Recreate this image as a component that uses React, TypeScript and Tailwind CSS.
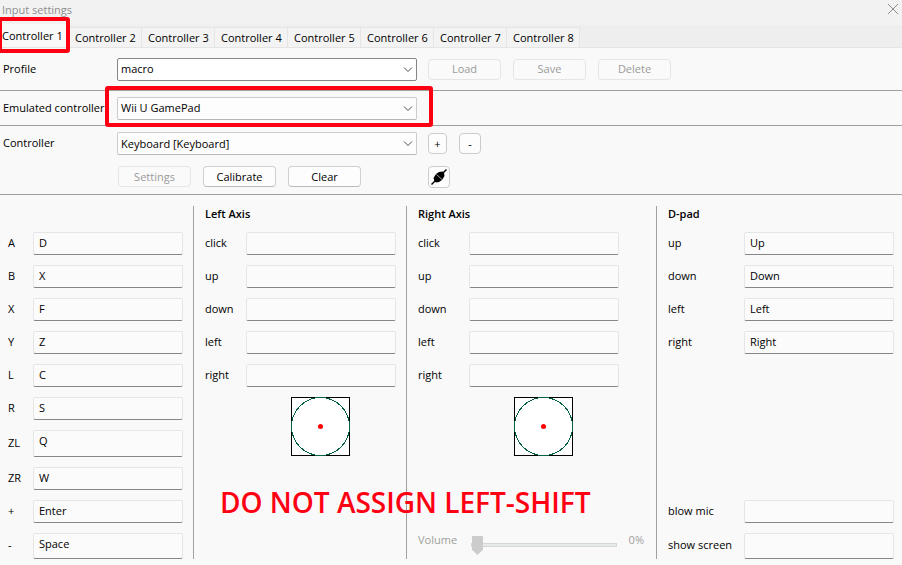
import type { ReactNode } from "react";

type Field = { label: string; value: string; tall?: "h-[27px]" | "h-[26px]" };

const buttons: Field[] = [
  { label: "A", value: "D" },
  { label: "B", value: "X" },
  { label: "X", value: "F" },
  { label: "Y", value: "Z" },
  { label: "L", value: "C" },
  { label: "R", value: "S" },
  { label: "ZL", value: "Q", tall: "h-[27px]" },
  { label: "ZR", value: "W" },
  { label: "+", value: "Enter" },
  { label: "-", value: "Space", tall: "h-[26px]" },
];

const axis: Field[] = ["click", "up", "down", "left", "right"].map((label) => ({ label, value: "" }));

const dpad: Field[] = [
  { label: "up", value: "Up" },
  { label: "down", value: "Down" },
  { label: "left", value: "Left" },
  { label: "right", value: "Right" },
];

const extras: Field[] = [
  { label: "blow mic", value: "" },
  { label: "show screen", value: "", tall: "h-[26px]" },
];

function FieldRow({ id, field, labelWidth }: { id: string; field: Field; labelWidth: string }) {
  return (
    <div className={`flex items-center ${field.tall ?? "h-[23px]"}`}>
      <label htmlFor={id} className={`shrink-0 pb-[2px] ${labelWidth}`}>
        {field.label}
      </label>
      <input
        id={id}
        type="text"
        defaultValue={field.value}
        className={`h-full w-full min-w-0 flex-1 rounded-[2px] border border-[#e6e6e6] border-b-[#868686] bg-[#fbfbfb] px-[5px] outline-none ${field.tall ? "pb-[6px]" : "pb-[2px]"}`}
      />
    </div>
  );
}

function Fields({ group, fields, labelWidth }: { group: string; fields: Field[]; labelWidth: string }) {
  return (
    <div className="flex flex-col gap-[10px]">
      {fields.map((field) => (
        <FieldRow key={field.label} id={`${group}-${field.label}`} field={field} labelWidth={labelWidth} />
      ))}
    </div>
  );
}

function Combo({ id, value, strong, children }: { id: string; value: string; strong?: boolean; children?: ReactNode }) {
  return (
    <div className="relative w-[300px]">
      <select
        id={id}
        defaultValue={value}
        className={`block h-[23px] w-full appearance-none rounded-[2px] border pr-6 pl-[3px] outline-none ${strong ? "border-[#868686] bg-white" : "border-[#cccccc] border-b-[#b8b8b8] bg-[#fdfdfd]"}`}
      >
        <option>{value}</option>
      </select>
      <svg className="pointer-events-none absolute top-2 right-1 h-2 w-[10px]" viewBox="0 0 10 8" fill="none" stroke="#4a4a4a">
        <path d="M1 1.5 5 5.5 9 1.5" />
      </svg>
      {children}
    </div>
  );
}

function PushButton({ children, disabled }: { children: ReactNode; disabled?: boolean }) {
  return (
    <button
      type="button"
      disabled={disabled}
      className="h-[21px] w-[73px] rounded-sm border border-[#d0d0d0] border-b-[#bcbcbc] bg-[#fdfdfd] disabled:border-[#e5e5e5] disabled:bg-[#fafafa] disabled:text-[#9b9b9b]"
    >
      {children}
    </button>
  );
}

function StickPreview() {
  return (
    <svg className="block size-[59px]" viewBox="0 0 59 59" fill="none" shapeRendering="crispEdges">
      <rect x="0.5" y="0.5" width="58" height="58" fill="#fff" stroke="#000" />
      <circle cx="29.5" cy="29.5" r="29" stroke="#00613a" />
      <circle cx="29.5" cy="29.5" r="2.5" fill="#f00" shapeRendering="auto" />
    </svg>
  );
}

export default function App() {
  return (
    <main className="min-h-screen bg-[#f9f9f9] font-['Open_Sans','Noto_Sans',sans-serif] text-[11px] leading-4 text-black">
      <header className="flex h-[25px] items-start justify-between bg-[#f2f2f2] pt-[2px] pr-1 pl-[2px] text-[#8f8f8f]">
        <h1>Input settings</h1>
        <button type="button" aria-label="Close" className="pt-[2px]">
          <svg className="size-[10px]" viewBox="0 0 10 10" fill="none" stroke="#8c8c8c">
            <path d="M0 0 10 10M10 0 0 10" />
          </svg>
        </button>
      </header>

      <nav role="tablist" className="flex h-[23px] items-end border-b border-[#e5e5e5] bg-[#eeeeee]">
        <button
          type="button"
          role="tab"
          aria-selected="true"
          className="relative h-[23px] w-[69px] bg-[#f9f9f9] pl-[2px] text-left whitespace-nowrap"
        >
          Controller 1
          <span className="pointer-events-none absolute -top-[7px] -bottom-[6px] -left-[2px] z-10 w-[72px] rounded-[3px] border-4 border-[#ff0013]" />
        </button>
        {[2, 3, 4, 5, 6, 7, 8].map((n) => (
          <button
            key={n}
            type="button"
            role="tab"
            aria-selected="false"
            className="h-5 w-[73px] border-t border-r border-[#e5e5e5] bg-[#f3f3f3] pl-[6px] text-left whitespace-nowrap"
          >
            Controller {n}
          </button>
        ))}
      </nav>

      <section className="flex h-[43px] items-center border-b border-[#a0a0a0] pl-[3px]">
        <label htmlFor="profile" className="w-[114px]">
          Profile
        </label>
        <Combo id="profile" value="macro" strong />
        <div className="ml-[11px] flex gap-3">
          <PushButton disabled>Load</PushButton>
          <PushButton disabled>Save</PushButton>
          <PushButton disabled>Delete</PushButton>
        </div>
      </section>

      <section className="flex h-[35px] items-center border-b border-[#a0a0a0] pl-[3px]">
        <label htmlFor="emulated" className="w-[114px] whitespace-nowrap">
          Emulated controller
        </label>
        <Combo id="emulated" value="Wii U GamePad">
          <span className="pointer-events-none absolute -top-[11px] -right-4 -bottom-[7px] -left-3 rounded-[3px] border-4 border-[#ff0013]" />
        </Combo>
      </section>

      <section className="flex flex-col border-b border-[#a0a0a0] pl-[3px]">
        <div className="flex h-[35px] items-center">
          <label htmlFor="controller" className="w-[114px] pb-[2px]">
            Controller
          </label>
          <Combo id="controller" value="Keyboard [Keyboard]" />
          <button type="button" className="ml-[11px] h-[21px] w-[19px] rounded-sm border border-[#cccccc] bg-[#fdfdfd]">
            +
          </button>
          <button type="button" className="ml-3 h-[21px] w-[22px] rounded-sm border border-[#cccccc] bg-[#fdfdfd]">
            -
          </button>
        </div>
        <div className="flex h-[33px] items-center pb-[2px] pl-[115px]">
          <div className="flex w-[310px] gap-3">
            <PushButton disabled>Settings</PushButton>
            <PushButton>Calibrate</PushButton>
            <PushButton>Clear</PushButton>
          </div>
          <button
            type="button"
            aria-label="Connect"
            className="flex size-[22px] items-center justify-center rounded-sm border border-[#cccccc] bg-[#fdfdfd]"
          >
            <svg className="size-4" viewBox="0 0 16 16">
              <path d="M0.5 15.5 15.5 0.5" stroke="#000" strokeWidth="1.4" />
              <path d="M3.500 12.500 2.500 9 5 5 8 3 11.500 2.500 13 3.500 13.500 7 11 11 8 13 5 13.500Z" fill="#000" />
              <path d="M5.500 5.500 11 10.500" stroke="#ccc" strokeWidth="0.8" />
            </svg>
          </button>
        </div>
      </section>

      <div className="relative grid grid-cols-[minmax(0,194fr)_minmax(0,213fr)_minmax(0,250fr)_minmax(0,245fr)] pt-[11px] pb-[6px]">
        <section className="h-[353px] border-r border-[#a0a0a0] pt-[26px] pr-[10px] pl-2">
          <Fields group="button" fields={buttons} labelWidth="w-[25px]" />
        </section>

        <section className="border-r border-[#a0a0a0] pr-[10px] pl-[11px]">
          <h2 className="pb-[10px] font-semibold">Left Axis</h2>
          <Fields group="left-axis" fields={axis} labelWidth="w-[41px]" />
          <div className="mt-[10px] flex justify-center pr-px pl-10">
            <StickPreview />
          </div>
        </section>

        <section className="flex flex-col border-r border-[#a0a0a0] pl-[11px]">
          <div className="pr-[37px]">
            <h2 className="pb-[10px] font-semibold">Right Axis</h2>
            <Fields group="right-axis" fields={axis} labelWidth="w-[51px]" />
            <div className="mt-[10px] flex justify-center pr-px pl-[50px]">
              <StickPreview />
            </div>
          </div>
          <div className="mt-auto flex items-start pr-3 pb-1 text-[#a0a0a0]">
            <label htmlFor="volume" className="w-[53px]">
              Volume
            </label>
            <input
              id="volume"
              type="range"
              min={0}
              max={100}
              defaultValue={0}
              disabled
              className="mt-[3px] h-5 min-w-0 flex-1 appearance-none bg-transparent [&::-webkit-slider-runnable-track]:h-1 [&::-webkit-slider-runnable-track]:border [&::-webkit-slider-runnable-track]:border-[#d6d6d6] [&::-webkit-slider-runnable-track]:bg-[#e7eaea] [&::-webkit-slider-thumb]:-mt-[8px] [&::-webkit-slider-thumb]:h-[19px] [&::-webkit-slider-thumb]:w-[11px] [&::-webkit-slider-thumb]:appearance-none [&::-webkit-slider-thumb]:bg-[#cccccc] [&::-webkit-slider-thumb]:[clip-path:polygon(0_0,100%_0,100%_72%,50%_100%,0_72%)]"
            />
            <output htmlFor="volume" className="ml-3">
              0%
            </output>
          </div>
        </section>

        <section className="flex flex-col justify-between pr-2 pl-[11px]">
          <div>
            <h2 className="pb-[10px] font-semibold">D-pad</h2>
            <Fields group="dpad" fields={dpad} labelWidth="w-[76px]" />
          </div>
          <Fields group="extra" fields={extras} labelWidth="w-[76px]" />
        </section>

        <p className="pointer-events-none absolute top-[287px] left-[220px] text-[28px] leading-10 font-semibold whitespace-nowrap text-[#ff0013]">
          DO NOT ASSIGN LEFT-SHIFT
        </p>
      </div>
    </main>
  );
}
